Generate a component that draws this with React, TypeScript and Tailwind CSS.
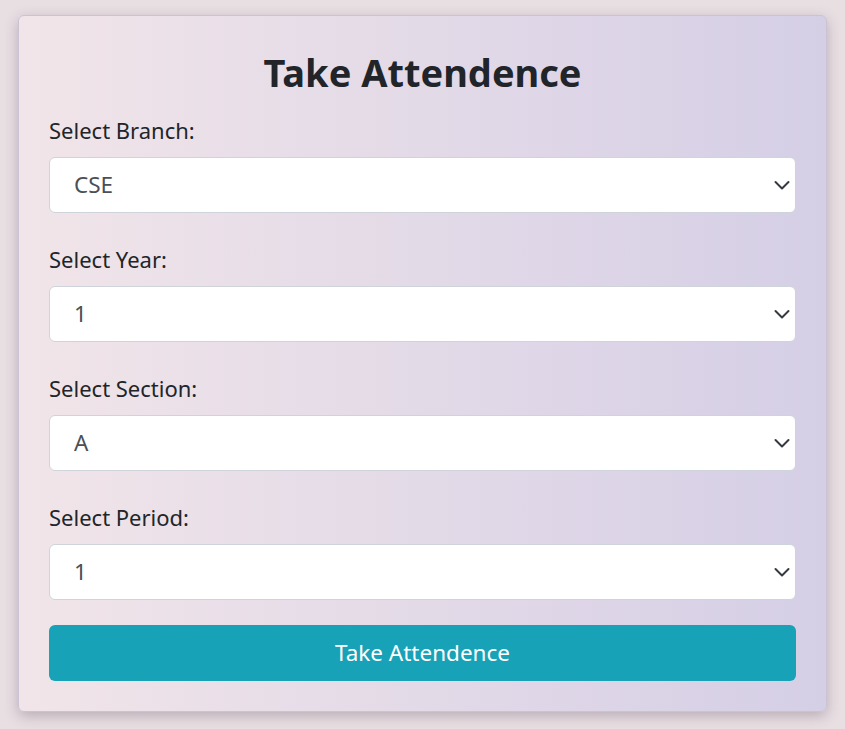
import React from "react";

const fields = [
  { label: "Select Branch:", value: "CSE", options: ["CSE", "ECE", "EEE", "MECH", "CIVIL"] },
  { label: "Select Year:", value: "1", options: ["1", "2", "3", "4"] },
  { label: "Select Section:", value: "A", options: ["A", "B", "C"] },
  { label: "Select Period:", value: "1", options: ["1", "2", "3", "4", "5", "6", "7"] },
];

function Chevron() {
  return (
    <svg
      width="16"
      height="16"
      viewBox="0 0 16 16"
      className="pointer-events-none absolute right-[6px] top-1/2 -translate-y-1/2"
    >
      <path d="M1.5 5l6.5 6.5 6.5-6.5" fill="none" stroke="#343a40" strokeWidth="2" strokeLinecap="round" strokeLinejoin="round" />
    </svg>
  );
}

export default function App() {
  return (
    <div
      className="min-h-[729px] bg-[#e8dfe3] pt-[15px] px-[18px]"
      style={{ fontFamily: '"Noto Sans", "Open Sans", sans-serif' }}
    >
      <div className="w-[809px] rounded-[6px] border border-[#cbc3d3] bg-gradient-to-r from-[#f1e5e9] to-[#d5cfe6] px-[30px] pt-[32px] pb-[30px] shadow-[0_4px_14px_rgba(60,40,60,0.28)]">
        <h1 className="mb-[19px] text-center text-[38px] font-bold leading-[48px] text-[#212529]">
          Take Attendence
        </h1>
        <div className="flex flex-col gap-[31px]">
          {fields.map((f) => (
            <div key={f.label}>
              <label className="mb-[12px] block text-[22px] leading-[30px] text-[#212529]">{f.label}</label>
              <div className="relative">
                <select
                  defaultValue={f.value}
                  className="h-[56px] w-full appearance-none rounded-[6px] border border-[#ced4da] bg-white pl-[24px] text-[22.5px] text-[#495057] outline-none"
                >
                  {f.options.map((o) => (
                    <option key={o}>{o}</option>
                  ))}
                </select>
                <Chevron />
              </div>
            </div>
          ))}
        </div>
        <button className="mt-[25px] h-[56px] w-full rounded-[6px] bg-[#17a2b8] text-[22.5px] text-white">
          Take Attendence
        </button>
      </div>
    </div>
  );
}
